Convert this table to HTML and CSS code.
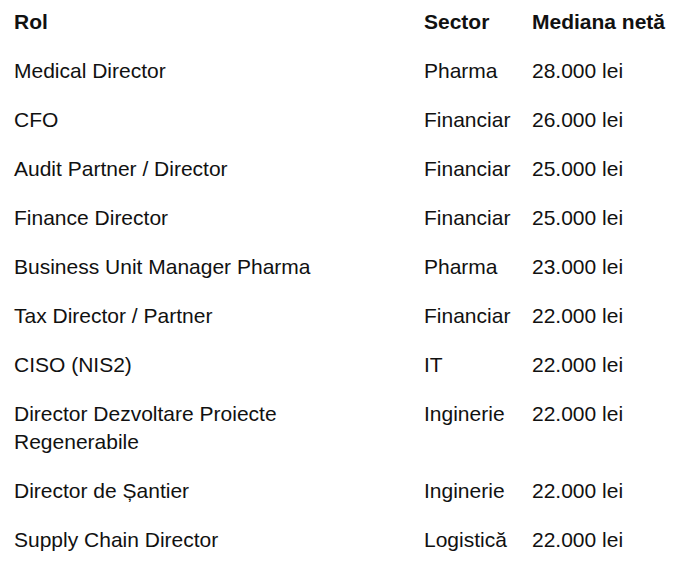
FILE: index.html
```html
<!DOCTYPE html>
<html lang="ro">
<head>
<meta charset="utf-8">
<title>Mediana netă</title>
<link rel="stylesheet" href="styles.css">
</head>
<body>
<div class="table">
  <div class="cell head c1">Rol</div>
  <div class="cell head c2">Sector</div>
  <div class="cell head c3">Mediana netă</div>

  <div class="cell c1">Medical Director</div>
  <div class="cell c2">Pharma</div>
  <div class="cell c3">28.000 lei</div>

  <div class="cell c1">CFO</div>
  <div class="cell c2">Financiar</div>
  <div class="cell c3">26.000 lei</div>

  <div class="cell c1">Audit Partner / Director</div>
  <div class="cell c2">Financiar</div>
  <div class="cell c3">25.000 lei</div>

  <div class="cell c1">Finance Director</div>
  <div class="cell c2">Financiar</div>
  <div class="cell c3">25.000 lei</div>

  <div class="cell c1">Business Unit Manager Pharma</div>
  <div class="cell c2">Pharma</div>
  <div class="cell c3">23.000 lei</div>

  <div class="cell c1">Tax Director / Partner</div>
  <div class="cell c2">Financiar</div>
  <div class="cell c3">22.000 lei</div>

  <div class="cell c1">CISO (NIS2)</div>
  <div class="cell c2">IT</div>
  <div class="cell c3">22.000 lei</div>

  <div class="cell c1">Director Dezvoltare Proiecte Regenerabile</div>
  <div class="cell c2">Inginerie</div>
  <div class="cell c3">22.000 lei</div>

  <div class="cell c1">Director de Șantier</div>
  <div class="cell c2">Inginerie</div>
  <div class="cell c3">22.000 lei</div>

  <div class="cell c1">Supply Chain Director</div>
  <div class="cell c2">Logistică</div>
  <div class="cell c3">22.000 lei</div>
</div>
</body>
</html>
```
FILE: styles.css
```css
html, body {
  margin: 0;
  padding: 0;
  background: #ffffff;
}
body {
  padding: 8px 0 0 8px;
  font-family: "Liberation Sans", Arial, sans-serif;
  font-size: 21px;
  line-height: 28px;
  color: #111111;
}
.table {
  display: grid;
  grid-template-columns: 410px 108px 1fr;
  align-items: start;
}
.cell {
  padding: 0 6px 21px 6px;
}
.c1 {
  padding-right: 20px;
}
.head {
  font-weight: bold;
}
```
